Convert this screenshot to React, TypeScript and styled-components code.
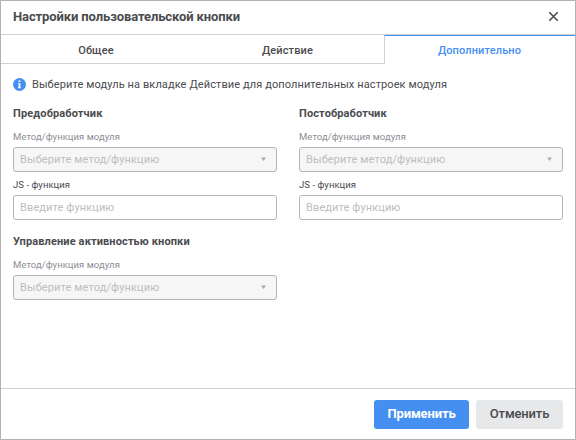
import React from 'react';
import styled, { createGlobalStyle } from 'styled-components';

const GlobalStyle = createGlobalStyle`
  * {
    box-sizing: border-box;
  }
  body {
    margin: 0;
    font-family: Roboto, 'Liberation Sans', sans-serif;
    color: #4a4b4f;
    background: #fff;
  }
`;

const Dialog = styled.div`
  display: flex;
  flex-direction: column;
  width: 576px;
  height: 440px;
  border: 1px solid #b2b2b2;
  background: #fff;
`;

const Header = styled.div`
  display: flex;
  justify-content: space-between;
  align-items: center;
  height: 34px;
  padding: 0 16px 2px 12px;
  border-bottom: 1px solid #cfd0d8;
`;

const Title = styled.div`
  font-size: 13px;
  font-weight: 700;
  line-height: 20px;
  letter-spacing: -0.11px;
`;

const CloseButton = styled.button`
  display: flex;
  padding: 0;
  border: 0;
  background: none;
  color: #4a4b4f;
  cursor: pointer;
`;

const Tabs = styled.div`
  display: grid;
  grid-template-columns: 191px 192px 191px;
  height: 29px;
`;

const Tab = styled.div<{ $active?: boolean }>`
  display: flex;
  align-items: center;
  justify-content: center;
  padding-top: ${({ $active }) => ($active ? 0 : 2)}px;
  padding-right: 1px;
  font-size: 11px;
  font-weight: 500;
  letter-spacing: 0.12px;
  color: ${({ $active }) => ($active ? '#448ff0' : '#4a4b4f')};
  border-top: ${({ $active }) => ($active ? '1px solid #448ff0' : '0')};
  border-left: ${({ $active }) => ($active ? '1px solid #cfd0d8' : '0')};
  border-bottom: ${({ $active }) => ($active ? '0' : '1px solid #cfd0d8')};
  cursor: pointer;
`;

const Content = styled.div`
  flex: 1;
  padding: 13px 12px 0;
`;

const Hint = styled.div`
  display: flex;
  align-items: center;
  gap: 6px;
  height: 14px;
  margin-bottom: 16px;
  font-size: 11px;
  letter-spacing: 0.1px;
`;

const Grid = styled.div`
  display: grid;
  grid-template-columns: 264px 264px;
  column-gap: 22px;
  row-gap: 15px;
`;

const SectionTitle = styled.div`
  height: 14px;
  margin-bottom: 10px;
  font-size: 11px;
  font-weight: 700;
  line-height: 14px;
  letter-spacing: 0.12px;
`;

const Label = styled.div<{ $disabled?: boolean }>`
  height: 12px;
  margin-bottom: 4px;
  font-size: 9.5px;
  line-height: 12px;
  letter-spacing: 0.05px;
  color: ${({ $disabled }) => ($disabled ? '#8d8e94' : '#4a4b4f')};
`;

const Select = styled.div`
  display: flex;
  align-items: center;
  justify-content: space-between;
  height: 25px;
  padding: 0 10px 1px 6px;
  border: 1px solid #b3b4bd;
  border-radius: 3px;
  background: #f6f6f6;
  font-size: 11px;
  letter-spacing: 0.12px;
  color: #bcbdc1;
`;

const Input = styled.input`
  display: block;
  width: 100%;
  height: 25px;
  padding: 0 6px 1px;
  border: 1px solid #b3b4bd;
  border-radius: 3px;
  outline: none;
  background: #fff;
  font-family: inherit;
  font-size: 11px;
  letter-spacing: 0.12px;
  &::placeholder {
    color: #bcbdc1;
  }
`;

const Field = styled.div`
  & + & {
    margin-top: 7px;
  }
`;

const Footer = styled.div`
  display: flex;
  justify-content: flex-end;
  gap: 7px;
  height: 51px;
  padding: 11px 12px 0;
  border-top: 1px solid #cfd0d5;
`;

const Button = styled.button<{ $primary?: boolean }>`
  width: ${({ $primary }) => ($primary ? 95 : 87)}px;
  height: 29px;
  padding: 0 0 2px;
  border: 0;
  border-radius: 3px;
  background: ${({ $primary }) => ($primary ? '#448ff0' : '#e7e8ea')};
  color: ${({ $primary }) => ($primary ? '#fff' : '#4a4b4f')};
  font-family: inherit;
  font-size: 13px;
  font-weight: ${({ $primary }) => ($primary ? 700 : 500)};
  letter-spacing: -0.15px;
  cursor: pointer;
`;

const InfoIcon = () => (
  <svg width='13' height='13' viewBox='0 0 13 13'>
    <circle cx='6.5' cy='6.5' r='6.5' fill='#448ff0' />
    <path d='M5.6 2.6h1.8v1.5H5.6zM5 5.2h2.4V9.4H8v.9H5v-.9h.6V6.1H5z' fill='#fff' />
  </svg>
);

const CloseIcon = () => (
  <svg width='11' height='11' viewBox='0 0 11 11'>
    <path d='M1.3 1.3l8.4 8.4M9.7 1.3L1.3 9.7' stroke='currentColor' strokeWidth='1.6' />
  </svg>
);

const ArrowIcon = () => (
  <svg width='5' height='4' viewBox='0 0 5 4'>
    <path d='M0 0.5h5L2.5 4z' fill='#a9aab2' />
  </svg>
);

const MethodField = () => (
  <Field>
    <Label $disabled>Метод/функция модуля</Label>
    <Select>
      <span>Выберите метод/функцию</span>
      <ArrowIcon />
    </Select>
  </Field>
);

interface HandlerSectionProps {
  title: string;
  withFunction?: boolean;
}

const HandlerSection = ({
  title,
  withFunction,
}: HandlerSectionProps): React.ReactElement => (
  <div>
    <SectionTitle>{title}</SectionTitle>
    <MethodField />
    {withFunction && (
      <Field>
        <Label>JS - функция</Label>
        <Input placeholder='Введите функцию' />
      </Field>
    )}
  </div>
);

const App = (): React.ReactElement => (
  <>
    <GlobalStyle />
    <Dialog>
      <Header>
        <Title>Настройки пользовательской кнопки</Title>
        <CloseButton aria-label='Закрыть'>
          <CloseIcon />
        </CloseButton>
      </Header>
      <Tabs>
        <Tab>Общее</Tab>
        <Tab>Действие</Tab>
        <Tab $active>Дополнительно</Tab>
      </Tabs>
      <Content>
        <Hint>
          <InfoIcon />
          <span>
            Выберите модуль на вкладке Действие для дополнительных настроек
            модуля
          </span>
        </Hint>
        <Grid>
          <HandlerSection title='Предобработчик' withFunction />
          <HandlerSection title='Постобработчик' withFunction />
          <HandlerSection title='Управление активностью кнопки' />
        </Grid>
      </Content>
      <Footer>
        <Button $primary>Применить</Button>
        <Button>Отменить</Button>
      </Footer>
    </Dialog>
  </>
);

export default App;
